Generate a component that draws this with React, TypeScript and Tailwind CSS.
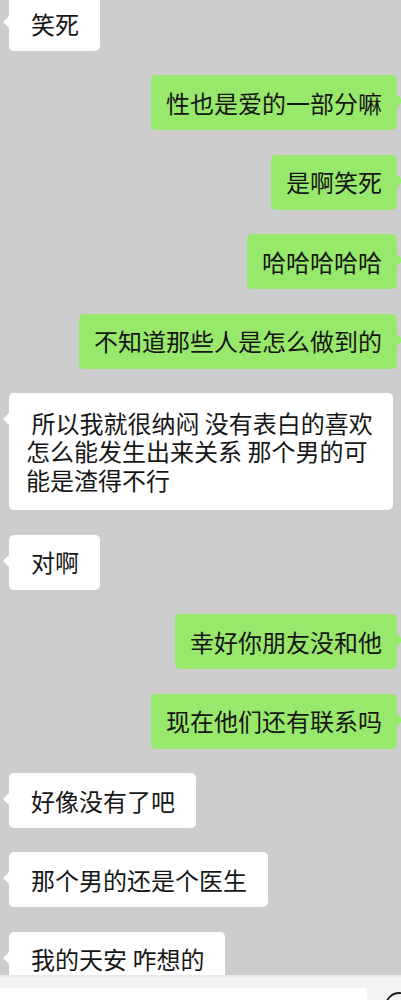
type Msg = { side: 'left' | 'right'; lines: string[]; width?: string }

const messages: Msg[] = [
  { side: 'left', lines: ['笑死'] },
  { side: 'right', lines: ['性也是爱的一部分嘛'] },
  { side: 'right', lines: ['是啊笑死'] },
  { side: 'right', lines: ['哈哈哈哈哈'] },
  { side: 'right', lines: ['不知道那些人是怎么做到的'] },
  {
    side: 'left',
    lines: ['\u00a0所以我就很纳闷 没有表白的喜欢', '怎么能发生出来关系 那个男的可', '能是渣得不行'],
    width: 'w-[384px]',
  },
  { side: 'left', lines: ['对啊'] },
  { side: 'right', lines: ['幸好你朋友没和他'] },
  { side: 'right', lines: ['现在他们还有联系吗'] },
  { side: 'left', lines: ['好像没有了吧'] },
  { side: 'left', lines: ['那个男的还是个医生'] },
  { side: 'left', lines: ['我的天安 咋想的'] },
]

function Bubble({ msg }: { msg: Msg }) {
  const isLeft = msg.side === 'left'
  const multi = msg.lines.length > 1
  const pad = multi
    ? 'pl-[17px] pr-[14px] py-[16px] leading-[28.5px]'
    : isLeft
      ? 'pl-[22px] pr-[21px] py-[12.5px] leading-[30px]'
      : 'pl-[15px] pr-[15px] py-[12.5px] leading-[30px]'
  return (
    <div className={`flex ${isLeft ? 'justify-start pl-[9px]' : 'justify-end pr-[4px]'}`}>
      <div
        className={`relative rounded-[5px] ${pad} text-[24px] text-[#161616] ${
          isLeft ? 'bg-white' : 'bg-[#98e86c]'
        } ${msg.width ?? ''}`}
      >
        {msg.lines.map((l, i) => (
          <div key={i} className="whitespace-pre">
            {l}
          </div>
        ))}
        {isLeft ? (
          <span className="absolute left-[-6px] top-[20px] h-0 w-0 border-y-[6px] border-r-[6px] border-y-transparent border-r-white" />
        ) : (
          <span className="absolute right-[-6px] top-[20px] h-0 w-0 border-y-[6px] border-l-[6px] border-y-transparent border-l-[#98e86c]" />
        )}
      </div>
    </div>
  )
}

export default function App() {
  return (
    <div
      className="flex h-[1000px] w-[401px] flex-col overflow-hidden bg-[#cdcdcd]"
      style={{ fontFamily: '"Noto Sans CJK SC", "Noto Sans", sans-serif' }}
    >
      {/* Chat area */}
      <div className="flex-1 overflow-hidden">
        <div className="mt-[-4px] flex flex-col gap-[24.4px]">
          {messages.map((m, i) => (
            <Bubble key={i} msg={m} />
          ))}
        </div>
      </div>

      {/* Input bar */}
      <div className="relative h-[25px] shrink-0 border-t-[2px] border-[#e9e9e9] bg-[#f3f3f3]">
        <div className="ml-[-4px] mt-[11px] h-[20px] w-[371px] rounded-[4px] bg-white" />
        <svg className="absolute left-[384px] top-[14px]" width="30" height="30" viewBox="0 0 30 30">
          <circle cx="15" cy="15" r="13" fill="none" stroke="#1e1e1e" strokeWidth="1.8" />
        </svg>
      </div>
    </div>
  )
}
